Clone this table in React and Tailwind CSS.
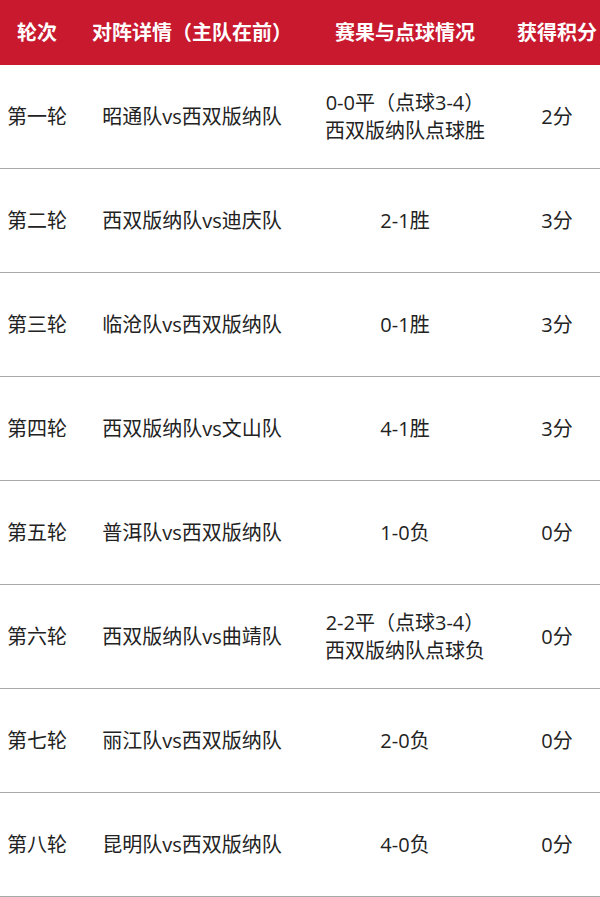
import React from "react";

const rounds = [
  { round: "第一轮", match: "昭通队vs西双版纳队", result: ["0-0平（点球3-4）", "西双版纳队点球胜"], points: "2分" },
  { round: "第二轮", match: "西双版纳队vs迪庆队", result: ["2-1胜"], points: "3分" },
  { round: "第三轮", match: "临沧队vs西双版纳队", result: ["0-1胜"], points: "3分" },
  { round: "第四轮", match: "西双版纳队vs文山队", result: ["4-1胜"], points: "3分" },
  { round: "第五轮", match: "普洱队vs西双版纳队", result: ["1-0负"], points: "0分" },
  { round: "第六轮", match: "西双版纳队vs曲靖队", result: ["2-2平（点球3-4）", "西双版纳队点球负"], points: "0分" },
  { round: "第七轮", match: "丽江队vs西双版纳队", result: ["2-0负"], points: "0分" },
  { round: "第八轮", match: "昆明队vs西双版纳队", result: ["4-0负"], points: "0分" },
];

const cols = "grid grid-cols-[74px_236px_190px_114px] w-[614px]";

const App = () => {
  return (
    <div
      className="w-[600px] h-[897px] overflow-hidden bg-white"
      style={{ fontFamily: '"Open Sans", "Noto Sans CJK SC", sans-serif' }}
    >
      {/* header */}
      <div className={`${cols} h-[65px] bg-[#c8192f] text-white text-[20px] font-bold items-center text-center`}>
        <div>轮次</div>
        <div>对阵详情（主队在前）</div>
        <div>赛果与点球情况</div>
        <div className="whitespace-nowrap">获得积分</div>
      </div>

      {/* rows */}
      {rounds.map((r) => (
        <div
          key={r.round}
          className={`${cols} h-[104px] border-b border-[#a8a8a8] text-[20px] text-[#222] items-center text-center`}
        >
          <div>{r.round}</div>
          <div className="whitespace-nowrap">{r.match}</div>
          <div className="leading-[28px] whitespace-nowrap">
            {r.result.map((line) => (
              <div key={line}>{line}</div>
            ))}
          </div>
          <div>{r.points}</div>
        </div>
      ))}
    </div>
  );
};

export default App;
